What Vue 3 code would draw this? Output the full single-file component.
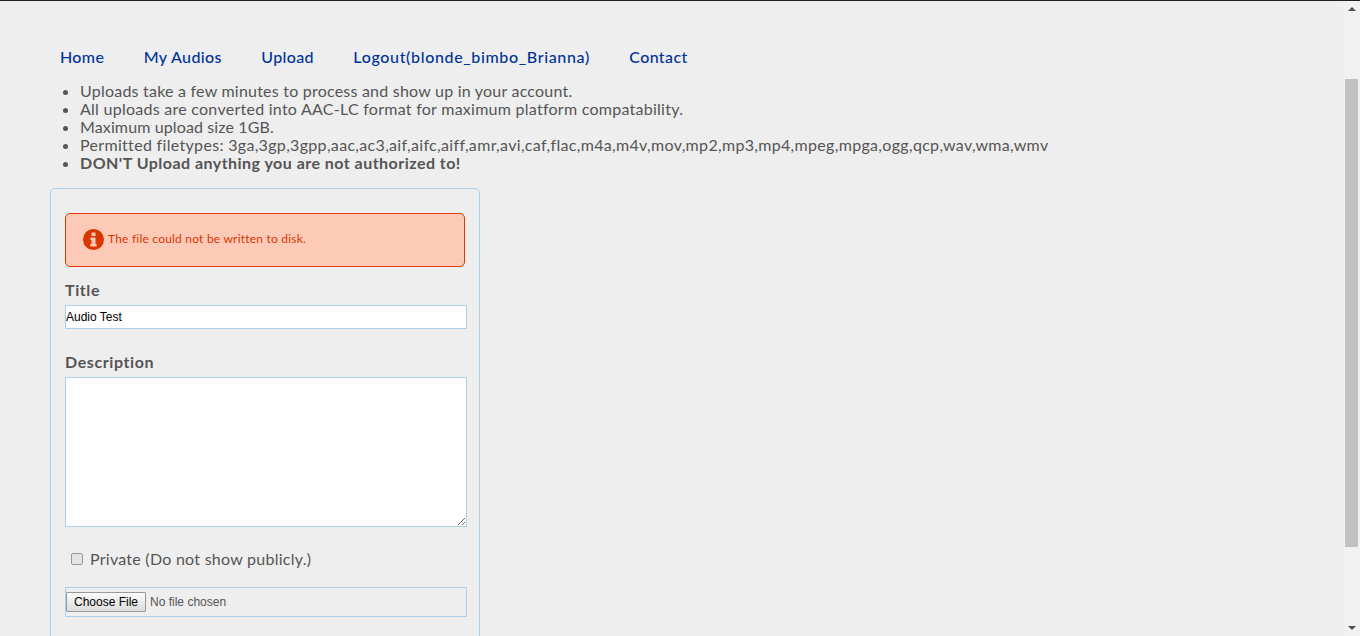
<template>
  <div class="page">
    <div class="content">
      <ul class="nav">
        <li v-for="link in links" :key="link"><a href="#" @click.prevent>{{ link }}</a></li>
      </ul>
      <ul class="notes">
        <li v-for="note in notes" :key="note">{{ note }}</li>
        <li><b>DON'T Upload anything you are not authorized to!</b></li>
      </ul>
      <form class="card" @submit.prevent>
        <div class="alert">
          <svg class="alert-icon" width="21" height="21" viewBox="0 0 21 21">
            <circle cx="10.5" cy="10.5" r="10.5" fill="#d93600" />
            <rect x="8.5" y="3.5" width="4" height="3.5" rx="0.6" fill="#fcc9b6" />
            <path d="M7.5 8.5h5v6.5h1.2v2.5H7.3V15h1.2v-4H7.5z" fill="#fcc9b6" />
          </svg>
          <span>The file could not be written to disk.</span>
        </div>
        <label class="field-label" for="title">Title</label>
        <input id="title" v-model="title" class="text-input" type="text" />
        <label class="field-label desc-label" for="desc">Description</label>
        <textarea id="desc" class="text-area"></textarea>
        <label class="private">
          <input type="checkbox" />
          <span>Private (Do not show publicly.)</span>
        </label>
        <input class="file-input" type="file" />
      </form>
    </div>
    <div class="scrollbar">
      <span class="arrow up"></span>
      <div class="track"><div class="thumb"></div></div>
      <span class="arrow down"></span>
    </div>
  </div>
</template>

<script setup>
import { ref } from "vue";

const title = ref("Audio Test");
const links = ["Home", "My Audios", "Upload", "Logout(blonde_bimbo_Brianna)", "Contact"];
const notes = [
  "Uploads take a few minutes to process and show up in your account.",
  "All uploads are converted into AAC-LC format for maximum platform compatability.",
  "Maximum upload size 1GB.",
  "Permitted filetypes: 3ga,3gp,3gpp,aac,ac3,aif,aifc,aiff,amr,avi,caf,flac,m4a,m4v,mov,mp2,mp3,mp4,mpeg,mpga,ogg,qcp,wav,wma,wmv",
];
</script>

<style>
html,
body {
  margin: 0;
  overflow: hidden;
}
</style>

<style scoped>
.page {
  display: flex;
  height: 636px;
  box-sizing: border-box;
  border-top: 1px solid #222;
  background: #eee;
  overflow: hidden;
  font-family: "Lato", sans-serif;
  font-size: 16px;
  color: #555;
}
.content {
  flex: 1;
  min-width: 0;
}
.nav {
  display: flex;
  list-style: none;
  margin: 0;
  padding: 45px 0 0 40.3px;
}
.nav li {
  padding: 0 19.7px;
  line-height: 22px;
  letter-spacing: 0.38px;
}
.nav li:nth-child(4) {
  letter-spacing: 0.65px;
}
.nav a {
  color: #003399;
  text-decoration: none;
  font-weight: 500;
}
.notes {
  margin: 14px 0 0;
  padding: 0 0 0 80px;
  line-height: 18px;
  letter-spacing: 0.22px;
}
.notes li:nth-child(2) {
  letter-spacing: 0.26px;
}
.notes li:nth-child(3) {
  letter-spacing: 0.12px;
}
.notes li:nth-child(4) {
  letter-spacing: 0.32px;
}
.notes b {
  font-weight: 700;
  letter-spacing: 0.47px;
}
.card {
  display: flex;
  flex-direction: column;
  align-items: flex-start;
  box-sizing: border-box;
  width: 430px;
  height: 500px;
  margin: 16px 0 0 50px;
  padding: 24px 12px 0 14px;
  border: 1px solid #a9d0ea;
  border-radius: 5px;
}
.alert {
  display: flex;
  align-items: center;
  gap: 4px;
  box-sizing: border-box;
  width: 400px;
  height: 54px;
  padding-left: 17px;
  border: 1px solid #e03a00;
  border-radius: 5px;
  background: #fdcab7;
  color: #d93600;
  font-size: 12px;
  letter-spacing: 0.21px;
}
.alert-icon {
  margin-bottom: 1px;
}
.alert span {
  margin-bottom: 3px;
}
.field-label {
  margin-top: 13px;
  font-weight: 700;
  line-height: 20px;
  letter-spacing: 0.6px;
}
.desc-label {
  margin-top: 23px;
}
.text-input,
.text-area,
.file-input {
  box-sizing: border-box;
  width: 402px;
  margin: 5px 0 0;
  padding: 0;
  border: 1px solid #a9d0ea;
  border-radius: 0;
  font-family: "Liberation Sans", sans-serif;
}
.text-input {
  height: 24px;
  font-size: 12px;
  color: #000;
  background: #fff;
  outline: none;
}
.text-area {
  display: block;
  height: 150px;
  background: #fff;
}
.private {
  display: flex;
  align-items: center;
  gap: 7px;
  height: 22px;
  margin: 21px 0 0 6px;
  letter-spacing: 0.26px;
}
.private span {
  margin-bottom: 2px;
}
.private input {
  appearance: none;
  box-sizing: border-box;
  width: 12px;
  height: 12px;
  margin: 0;
  border: 1px solid #999;
  border-radius: 2px;
  background: #e4e4e4;
}
.file-input {
  height: 30px;
  margin-top: 17px;
  font-size: 12px;
  color: #555;
}
.file-input::file-selector-button {
  margin: 4px 4px 0 0;
  height: 20px;
  padding: 0 7px;
  border: 1px solid #999;
  border-radius: 1px;
  background: linear-gradient(#fbfbfb, #dcdcdc);
  color: #000;
  font: 12px "Liberation Sans", sans-serif;
}
.scrollbar {
  display: flex;
  flex-direction: column;
  align-items: center;
  flex: none;
  width: 17px;
  background: #f1f1f1;
}
.arrow {
  flex: none;
  width: 0;
  height: 0;
  margin: 6px 0;
  border-left: 4px solid transparent;
  border-right: 4px solid transparent;
}
.arrow.up {
  border-bottom: 4px solid #505050;
}
.arrow.down {
  border-top: 4px solid #505050;
}
.track {
  flex: 1;
  width: 100%;
  padding: 62px 2px 0 2px;
  box-sizing: border-box;
}
.thumb {
  height: 468px;
  background: #c1c1c1;
}
</style>
